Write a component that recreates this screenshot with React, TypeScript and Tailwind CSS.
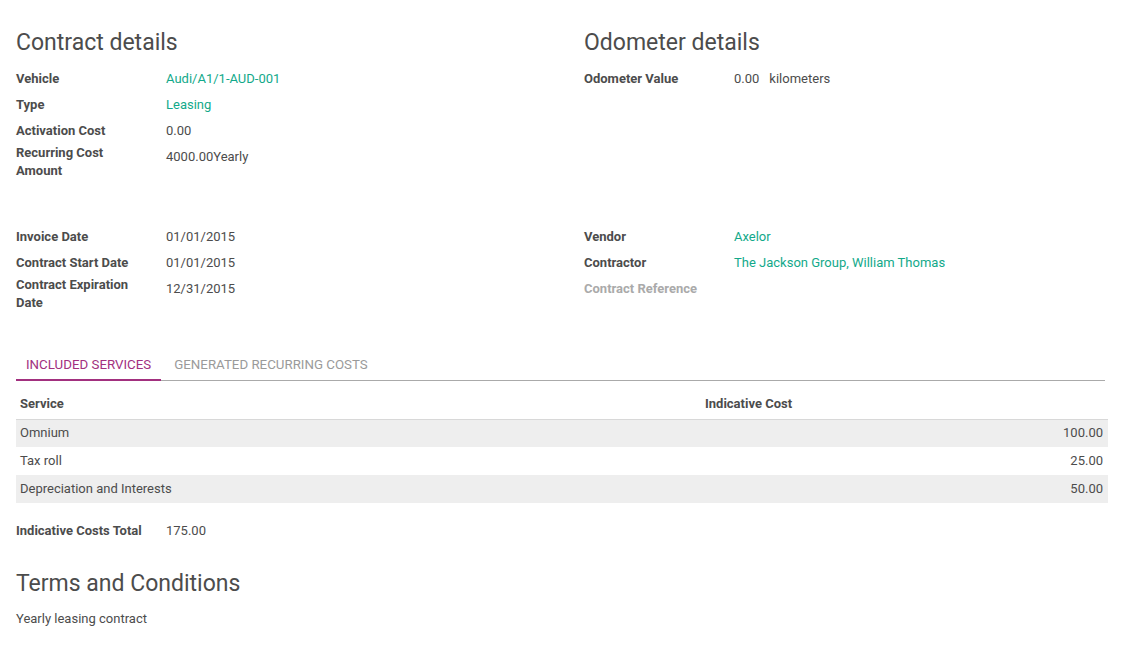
import React from 'react';

const green = 'text-[#12a98a]';

interface FieldProps {
  label: string;
  value?: React.ReactNode;
  link?: boolean;
  muted?: boolean;
}

const Field: React.FC<FieldProps> = ({ label, value, link, muted }) => (
  <div className="flex items-start">
    <div className="w-[150px] shrink-0 pr-5">
      <div
        className={`min-h-[26px] flex items-center font-bold leading-[18px] ${
          muted ? 'text-[#aaaaaa]' : 'text-[#4c4c4c]'
        }`}
      >
        {label}
      </div>
    </div>
    <div className={`py-1 leading-[18px] ${link ? green : 'text-[#4c4c4c]'}`}>{value}</div>
  </div>
);

const Heading: React.FC<{ children: React.ReactNode; className?: string }> = ({ children, className = '' }) => (
  <h2 className={`text-[23px] leading-[30px] text-[#4c4c4c] font-normal ${className}`}>{children}</h2>
);

const services = [
  { name: 'Omnium', cost: '100.00' },
  { name: 'Tax roll', cost: '25.00' },
  { name: 'Depreciation and Interests', cost: '50.00' },
];

export default function App() {
  return (
    <div
      className="w-[1126px] h-[655px] bg-white pl-4 pr-[18px] pt-[28px] text-[13px] text-[#4c4c4c] overflow-hidden"
      style={{ fontFamily: 'Roboto, "Liberation Sans", sans-serif' }}
    >
      {/* top groups */}
      <div className="grid grid-cols-[568px_1fr]">
        <div>
          <Heading className="mb-[8px]">Contract details</Heading>
          <Field label="Vehicle" value="Audi/A1/1-AUD-001" link />
          <Field label="Type" value="Leasing" link />
          <Field label="Activation Cost" value="0.00" />
          <Field label="Recurring Cost Amount" value="4000.00Yearly" />
        </div>
        <div>
          <Heading className="mb-[8px]">Odometer details</Heading>
          <Field
            label="Odometer Value"
            value={
              <span>
                0.00<span className="ml-[10px]">kilometers</span>
              </span>
            }
          />
        </div>
      </div>

      <div className="grid grid-cols-[568px_1fr] mt-[44px]">
        <div>
          <Field label="Invoice Date" value="01/01/2015" />
          <Field label="Contract Start Date" value="01/01/2015" />
          <Field label="Contract Expiration Date" value="12/31/2015" />
        </div>
        <div>
          <Field label="Vendor" value="Axelor" link />
          <Field label="Contractor" value="The Jackson Group, William Thomas" link />
          <Field label="Contract Reference" muted />
        </div>
      </div>

      {/* tabs */}
      <div className="mt-[34px] mr-[3px] flex border-b border-[#aaaaaa] text-[13.3px]">
        <div className="px-[10px] pt-[10px] pb-[5px] leading-[18px] uppercase text-[#a2307f] border-b-2 border-[#a2307f] -mb-px">
          Included Services
        </div>
        <div className="px-[13px] pt-[10px] pb-[5px] leading-[18px] uppercase text-[#9a9a9a] border-b-2 border-transparent -mb-px">
          Generated Recurring Costs
        </div>
      </div>

      {/* table */}
      <table className="mt-[10px] w-full border-collapse">
        <thead>
          <tr className="border-b border-[#d8d8d8]">
            <th className="w-[685px] h-[28px] px-1 pb-[2px] text-left font-bold leading-[18px]">Service</th>
            <th className="h-[28px] px-1 pb-[2px] text-left font-bold leading-[18px]">Indicative Cost</th>
          </tr>
        </thead>
        <tbody>
          {services.map((s, i) => (
            <tr key={s.name} className={i % 2 === 0 ? 'bg-[#eeeeee]' : 'bg-white'}>
              <td className="h-[28px] px-1 leading-[18px]">{s.name}</td>
              <td className="h-[28px] pl-1 pr-[5px] text-right leading-[18px]">{s.cost}</td>
            </tr>
          ))}
        </tbody>
      </table>

      <div className="mt-[15px]">
        <Field label="Indicative Costs Total" value="175.00" />
      </div>

      <Heading className="mt-[25px]">Terms and Conditions</Heading>
      <p className="mt-[11px] leading-[18px]">Yearly leasing contract</p>
    </div>
  );
}
